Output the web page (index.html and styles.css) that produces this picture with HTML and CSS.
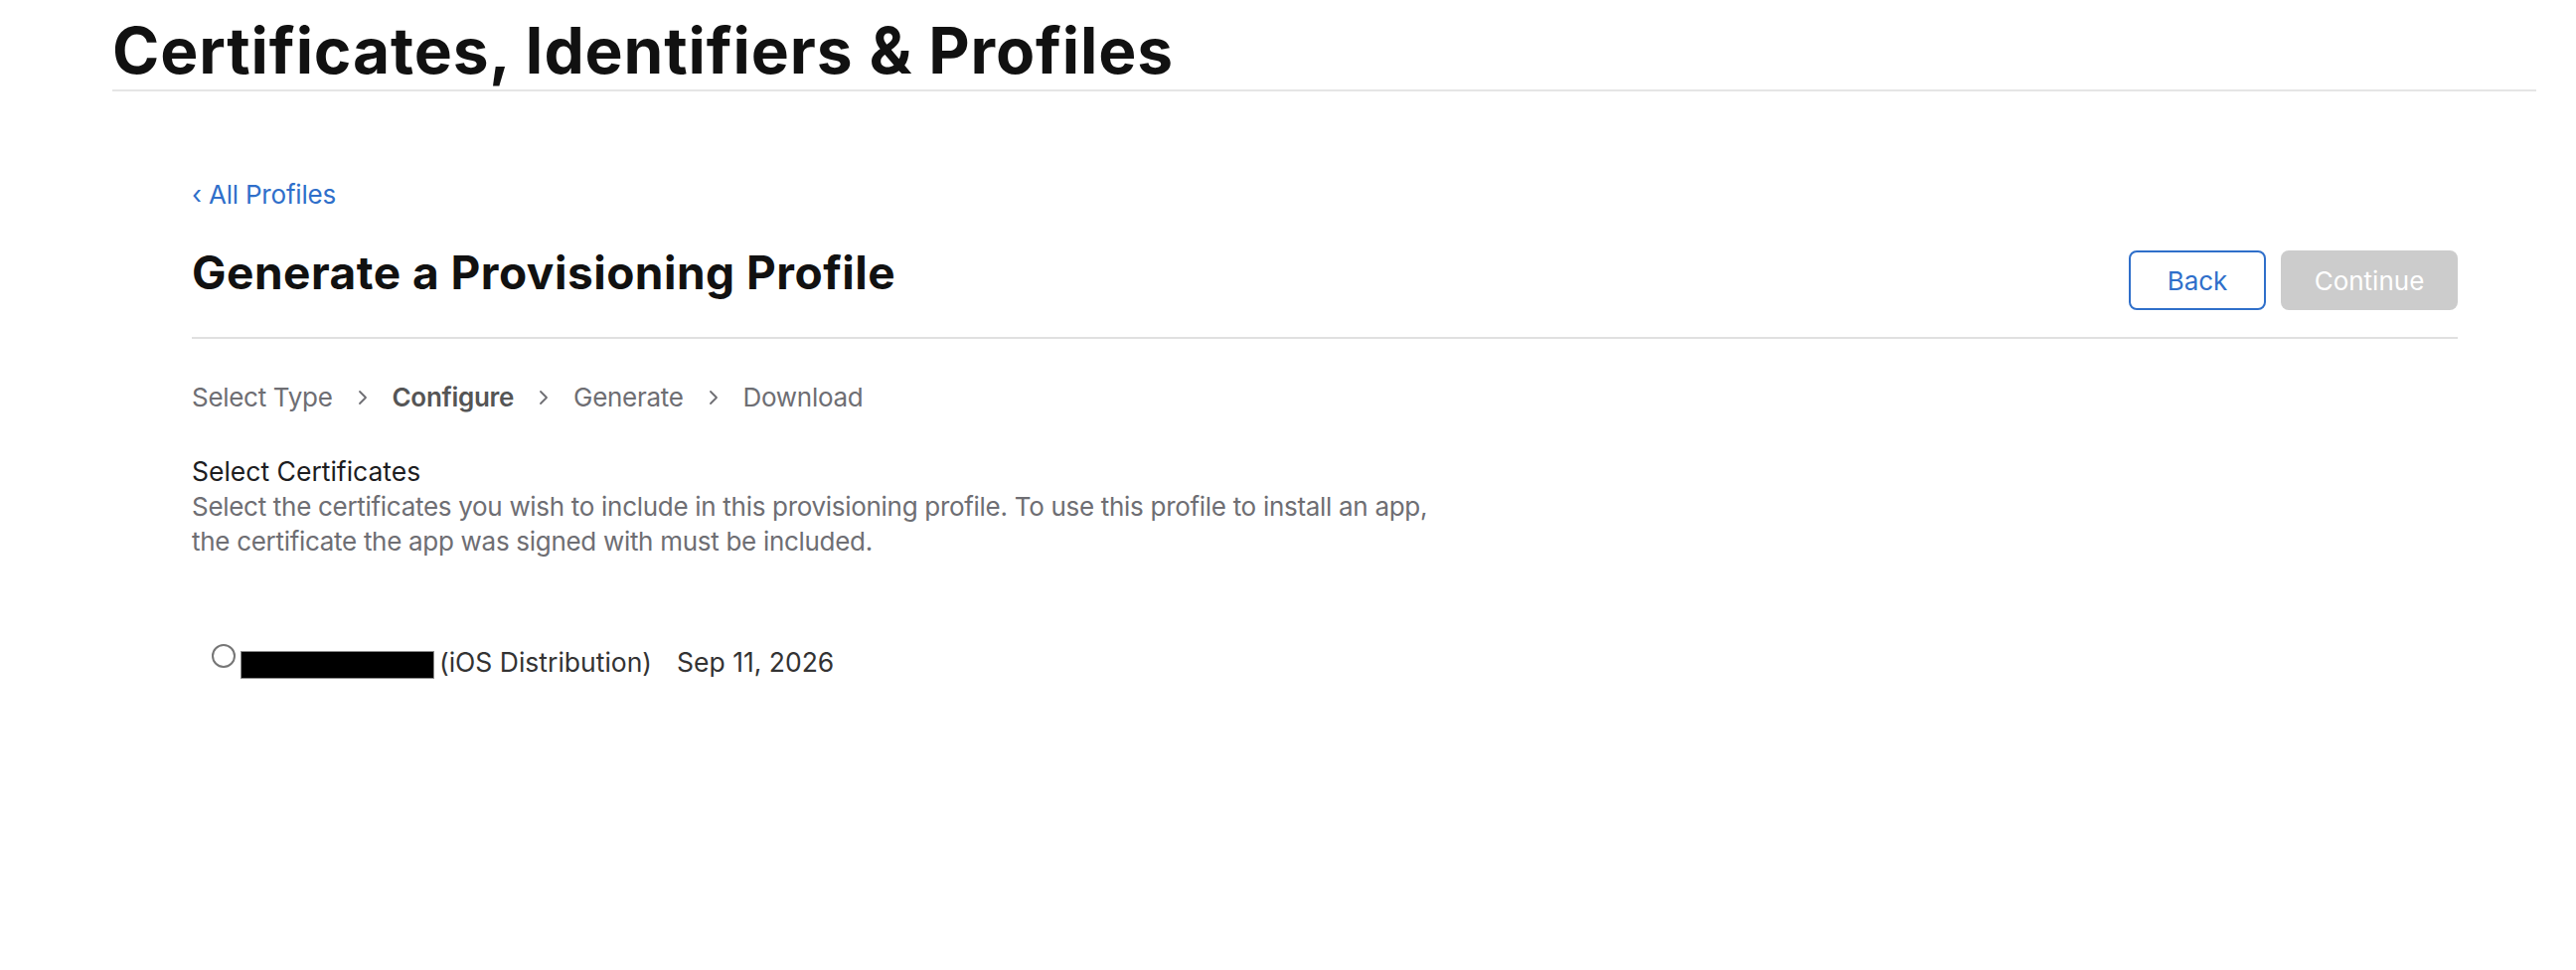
FILE: index.html
```html
<!DOCTYPE html>
<html lang="en">
<head>
<meta charset="utf-8">
<title>Certificates, Identifiers &amp; Profiles</title>
<link rel="stylesheet" href="styles.css">
</head>
<body>
<div class="page">
  <header class="site-header">
    <h1 class="site-title">Certificates, Identifiers &amp; Profiles</h1>
  </header>
  <main class="content">
    <a class="back-link" href="#"><span class="back-chev">‹</span> All Profiles</a>
    <div class="title-row">
      <h2 class="page-title">Generate a Provisioning Profile</h2>
      <div class="actions">
        <button class="btn btn-outline" type="button">Back</button>
        <button class="btn btn-disabled" type="button" disabled>Continue</button>
      </div>
    </div>
    <nav class="steps">
      <span class="step">Select Type</span>
      <svg class="chev" viewBox="0 0 10 16" width="10" height="16"><path d="M2 2 L8 8 L2 14" fill="none" stroke="#6e6e73" stroke-width="1.8" stroke-linecap="round" stroke-linejoin="round"/></svg>
      <span class="step step-current">Configure</span>
      <svg class="chev" viewBox="0 0 10 16" width="10" height="16"><path d="M2 2 L8 8 L2 14" fill="none" stroke="#6e6e73" stroke-width="1.8" stroke-linecap="round" stroke-linejoin="round"/></svg>
      <span class="step">Generate</span>
      <svg class="chev" viewBox="0 0 10 16" width="10" height="16"><path d="M2 2 L8 8 L2 14" fill="none" stroke="#6e6e73" stroke-width="1.8" stroke-linecap="round" stroke-linejoin="round"/></svg>
      <span class="step">Download</span>
    </nav>
    <section class="section">
      <h3 class="section-title">Select Certificates</h3>
      <p class="section-desc">Select the certificates you wish to include in this provisioning profile. To use this profile to install an app,<br>the certificate the app was signed with must be included.</p>
    </section>
    <label class="cert-row">
      <span class="radio"></span>
      <span class="redacted"></span>
      <span class="cert-type">(iOS Distribution)</span>
      <span class="cert-date">Sep 11, 2026</span>
    </label>
  </main>
</div>
</body>
</html>
```

FILE: styles.css
```css
html, body {
  margin: 0;
  padding: 0;
  background: #ffffff;
}

body {
  font-family: Inter, "Noto Sans", "Liberation Sans", sans-serif;
  color: #1d1d1f;
}

.page {
  padding: 0 40px 0 113px;
}

.site-header {
  padding-top: 19px;
  padding-bottom: 7px;
  border-bottom: 2px solid #e5e5e5;
}

.site-title {
  margin: 0;
  font-size: 64px;
  line-height: 64px;
  font-weight: 700;
  color: #111111;
  letter-spacing: 0.85px;
}

.content {
  padding: 86px 79px 0 80px;
}

.back-link {
  display: inline-block;
  font-size: 26px;
  line-height: 36px;
  color: #2f6fca;
  text-decoration: none;
  letter-spacing: -0.2px;
}

.title-row {
  margin-top: 32px;
  display: flex;
  justify-content: space-between;
  align-items: flex-start;
  padding-bottom: 27px;
  border-bottom: 2px solid #e0e0e0;
}

.page-title {
  margin: 0;
  font-size: 46px;
  line-height: 56px;
  font-weight: 700;
  color: #111111;
  letter-spacing: 0.5px;
}

.actions {
  display: flex;
  gap: 15px;
  margin-top: 6px;
}

.btn {
  box-sizing: border-box;
  height: 60px;
  border-radius: 8px;
  font-family: Inter, "Noto Sans", sans-serif;
  font-size: 26px;
  padding: 0;
}

.btn-outline {
  width: 138px;
  background: #ffffff;
  border: 2px solid #2f6fca;
  color: #2f6fca;
}

.btn-disabled {
  width: 178px;
  background: #cccccc;
  border: none;
  color: #ffffff;
}

.steps {
  margin-top: 41px;
  display: flex;
  align-items: center;
  gap: 25px;
  font-size: 26px;
  line-height: 36px;
  color: #6e6e73;
  letter-spacing: -0.3px;
}

.step-current {
  font-weight: 600;
  color: #555555;
}

.chev {
  display: block;
}

.section {
  margin-top: 38px;
}

.section-title {
  margin: 0;
  font-size: 26.5px;
  line-height: 36px;
  font-weight: 400;
  color: #1d1d1f;
  letter-spacing: 0;
}

.section-desc {
  margin: 0;
  font-size: 26px;
  line-height: 35px;
  color: #6e6e73;
  letter-spacing: -0.3px;
}

.cert-row {
  margin-top: 86px;
  display: flex;
  align-items: flex-start;
  font-size: 26.5px;
  line-height: 36px;
  color: #333333;
  padding-left: 20px;
}

.radio {
  box-sizing: border-box;
  width: 24px;
  height: 24px;
  border: 2px solid #767676;
  border-radius: 50%;
  margin-top: 0;
  margin-right: 5px;
}

.redacted {
  box-sizing: border-box;
  width: 195px;
  height: 28px;
  background: #000000;
  border: 1px solid #8a8a8a;
  margin-top: 7px;
  margin-right: 5px;
}

.cert-type {
  margin-right: 25px;
}
```
